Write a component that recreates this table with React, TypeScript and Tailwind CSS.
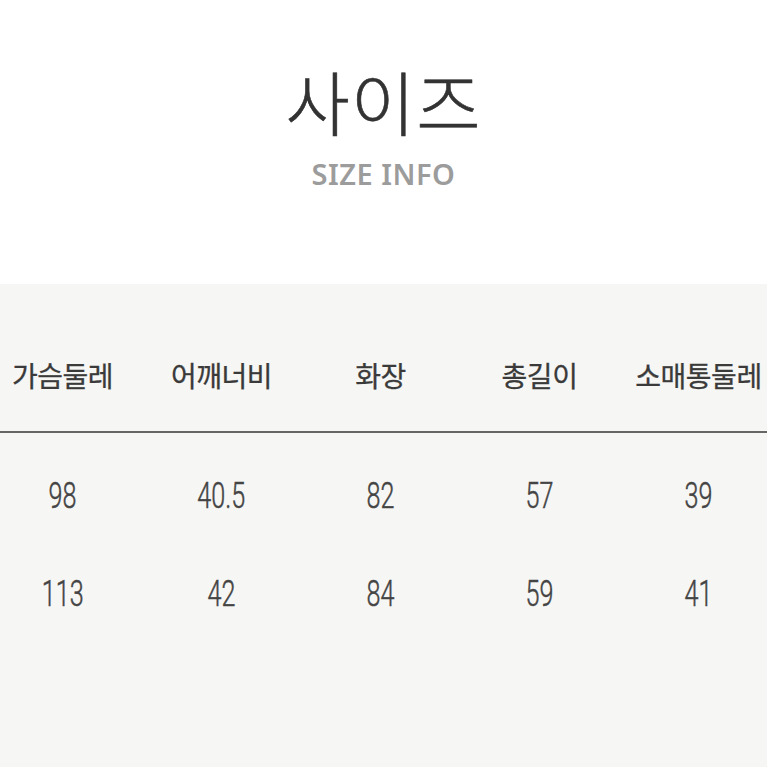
import React from "react";

const headers = ["가슴둘레", "어깨너비", "화장", "총길이", "소매통둘레"];
const rows = [
  ["98", "40.5", "82", "57", "39"],
  ["113", "42", "84", "59", "41"],
];

export default function App() {
  return (
    <div className="w-[767px] h-[767px] overflow-hidden bg-white flex flex-col">
      <div className="h-[284px] flex flex-col items-center">
        <div
          className="mt-[66px] text-[70px] leading-none font-light text-[#333] tracking-[1px] [-webkit-text-stroke:0.6px_#333]"
          style={{ fontFamily: '"Noto Sans CJK KR", "Noto Sans", sans-serif' }}
        >
          사이즈
        </div>
        <div
          className="mt-[23px] text-[29px] leading-none font-semibold text-[#9c9c9c] tracking-[0.5px]"
          style={{ fontFamily: '"Noto Sans", "Open Sans", sans-serif' }}
        >
          SIZE INFO
        </div>
      </div>
      <div className="flex-1 bg-[#f6f6f4] overflow-hidden">
        <div className="-ml-[17px] w-[795px]">
          <div className="grid grid-cols-[repeat(5,159px)] pt-[70px] pb-[35px] border-b-2 border-[#666]">
            {headers.map((h) => (
              <div
                key={h}
                className="text-center text-[28px] leading-[42px] font-normal text-[#3a3a3a] tracking-[-0.5px] [-webkit-text-stroke:0.3px_#3a3a3a]"
                style={{ fontFamily: '"Noto Sans CJK KR", "Noto Sans", sans-serif' }}
              >
                {h}
              </div>
            ))}
          </div>
          <div className="pt-[13px]">
            {rows.map((r, i) => (
              <div key={i} className="grid grid-cols-[repeat(5,159px)] h-[98px] items-center">
                {r.map((v, j) => (
                  <div key={j} className="flex justify-center">
                    <span
                      className="inline-block scale-x-[0.68] text-[37px] leading-none font-light text-[#444] [-webkit-text-stroke:0.5px_#444]"
                      style={{ fontFamily: 'Roboto, "Liberation Sans", sans-serif' }}
                    >
                      {v}
                    </span>
                  </div>
                ))}
              </div>
            ))}
          </div>
        </div>
      </div>
    </div>
  );
}
